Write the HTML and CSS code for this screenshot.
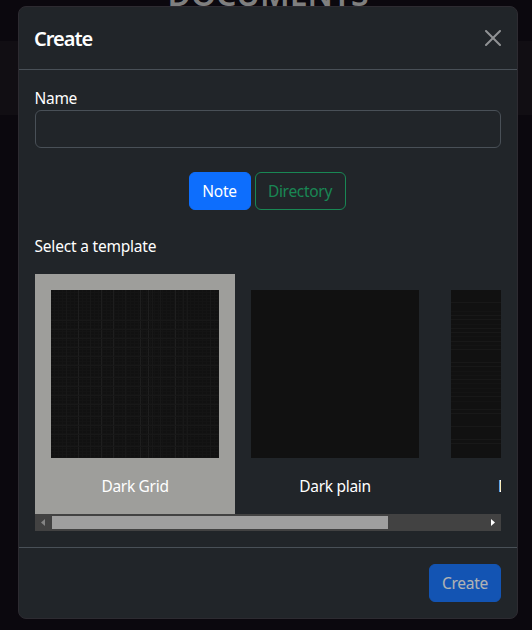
FILE: index.html
```html
<!DOCTYPE html>
<html lang="en">
<head>
<meta charset="utf-8">
<title>Create</title>
<link rel="stylesheet" href="styles.css">
</head>
<body>
<h1 class="page-title">DOCUMENTS</h1>
<div class="page-band"></div>
<div class="modal">
  <header class="modal-header">
    <h5 class="modal-title">Create</h5>
    <svg class="close" viewBox="0 0 16 16" aria-label="Close"><path d="M.293.293a1 1 0 0 1 1.414 0L8 6.586 14.293.293a1 1 0 1 1 1.414 1.414L9.414 8l6.293 6.293a1 1 0 0 1-1.414 1.414L8 9.414l-6.293 6.293a1 1 0 0 1-1.414-1.414L6.586 8 .293 1.707a1 1 0 0 1 0-1.414z"/></svg>
  </header>
  <main class="modal-body">
    <label class="label" for="name">Name</label>
    <input class="input" id="name" type="text">
    <div class="types">
      <button class="btn primary note">Note</button>
      <button class="btn outline directory">Directory</button>
    </div>
    <div class="label wide">Select a template</div>
    <div class="templates">
      <div class="template selected">
        <svg class="preview grid" viewBox="0 0 168 168"><path d="M27.500 0v168M50.500 0v168M62.500 0v168M89.500 0v168M97.500 0v168M124.500 0v168"/><path class="soft" d="M15.500 0v168M39.500 0v168M74.500 0v168M101.500 0v168M109.500 0v168M132.500 0v168M136.500 0v168M159.500 0v168M0 30.500h168M0 39.500h168M0 48.500h168M0 57.500h168M0 66.500h168M0 75.500h168M0 87.500h168M0 96.500h168M0 105.500h168M0 114.500h168M0 126.500h168M0 135.500h168M0 144.500h168M0 156.500h168"/></svg>
        <span>Dark Grid</span>
      </div>
      <div class="template"><div class="preview"></div><span>Dark plain</span></div>
      <div class="template">
        <svg class="preview" viewBox="0 0 168 168"><path class="soft" d="M0 12.500h168M0 25.500h168M0 29.500h168M0 38.500h168M0 42.500h168M0 51.500h168M0 59.500h168M0 72.500h168M0 76.500h168M0 89.500h168M0 106.500h168M0 119.500h168M0 123.500h168M0 136.500h168M0 149.500h168M0 153.500h168"/><path class="faint" d="M0 21.500h168M0 34.500h168M0 46.500h168M0 55.500h168M0 81.500h168M0 85.500h168M0 93.500h168M0 98.500h168M0 102.500h168M0 111.500h168"/></svg>
        <span>Dark ruled</span>
      </div>
    </div>
    <div class="scrollbar">
      <svg class="arrow off" viewBox="0 0 17 17"><path d="M10 5v7L6 8.500z"/></svg>
      <div class="track"><div class="thumb"></div></div>
      <svg class="arrow" viewBox="0 0 17 17"><path d="M7 5v7l4-3.500z"/></svg>
    </div>
  </main>
  <footer class="modal-footer">
    <button class="btn primary submit" disabled>Create</button>
  </footer>
</div>
</body>
</html>
```
FILE: styles.css
```css
* { box-sizing: border-box; }
body {
  margin: 0;
  height: 630px;
  overflow: hidden;
  position: relative;
  background: #0b080e;
  color: #fff;
  font: 15.5px/24px "Noto Sans", "Open Sans", sans-serif;
  letter-spacing: -0.3px;
}
.page-title {
  position: absolute;
  top: -26px;
  left: 0;
  width: 536px;
  margin: 0;
  text-align: center;
  font-size: 32px;
  font-weight: 600;
  line-height: 40px;
  letter-spacing: -0.1px;
  color: #7f7f7f;
}
.page-band { position: absolute; top: 41px; left: 0; right: 0; height: 74px; background: #110e13; }
.modal {
  position: relative;
  top: 6px;
  width: 500px;
  height: 613px;
  margin: 0 14px 0 18px;
  background: #212529;
  border: 1px solid #2d2b31;
  border-radius: 8px;
}
.modal-header {
  display: flex;
  align-items: center;
  justify-content: space-between;
  height: 63px;
  padding: 2px 16px 0 15px;
  border-bottom: 1px solid #495057;
}
.modal-title { margin: 0; font-size: 20px; font-weight: 600; line-height: 30px; letter-spacing: -1px; }
.close { width: 16px; height: 16px; margin-bottom: 2px; fill: #909294; }
.modal-body { padding: 16px; }
.label { display: block; height: 24px; margin-left: -0.5px; }
.wide { letter-spacing: -0.2px; }
.input {
  display: block;
  width: 100%;
  height: 38px;
  padding: 6px 12px;
  background: #212529;
  border: 1px solid #495057;
  border-radius: 6px;
}
.types { display: flex; justify-content: center; gap: 4px; margin: 24px 1px 24px 0; padding-right: 1px; }
.btn {
  display: flex;
  align-items: center;
  justify-content: center;
  height: 38px;
  padding: 0;
  border: 1px solid;
  border-radius: 6px;
  background: none;
  font: inherit;
  letter-spacing: inherit;
  white-space: nowrap;
}
.primary { color: #fff; background: #0d6efd; border-color: #0d6efd; }
.outline { color: #198754; border-color: #198754; }
.note { width: 62px; }
.directory { width: 91px; }
.submit { width: 72px; opacity: .65; }
.templates { display: flex; height: 240px; margin-top: 16px; overflow: hidden; }
.template {
  display: flex;
  flex: 0 0 200px;
  flex-direction: column;
  align-items: center;
  gap: 16px;
  padding: 16px;
  white-space: nowrap;
}
.selected { background: #9e9e9b; }
.preview { width: 168px; height: 168px; background-color: #111; fill: none; stroke: #1e1e1e; }
.soft { stroke: #181818; }
.faint { stroke: #141414; }
.grid {
  background-image:
    repeating-linear-gradient(90deg, transparent 0 3px, #141414 3px 4px),
    repeating-linear-gradient(transparent 0 2px, #141414 2px 3px);
}
.scrollbar { display: flex; height: 17px; background: #424242; }
.arrow { width: 17px; height: 17px; fill: #fff; }
.off { fill: #858585; }
.track { flex: 1; padding: 2px 0; }
.thumb { width: 336px; height: 13px; background: #9f9f9f; }
.modal-footer {
  display: flex;
  justify-content: flex-end;
  height: 71px;
  padding: 16px;
  border-top: 1px solid #495057;
}
```
